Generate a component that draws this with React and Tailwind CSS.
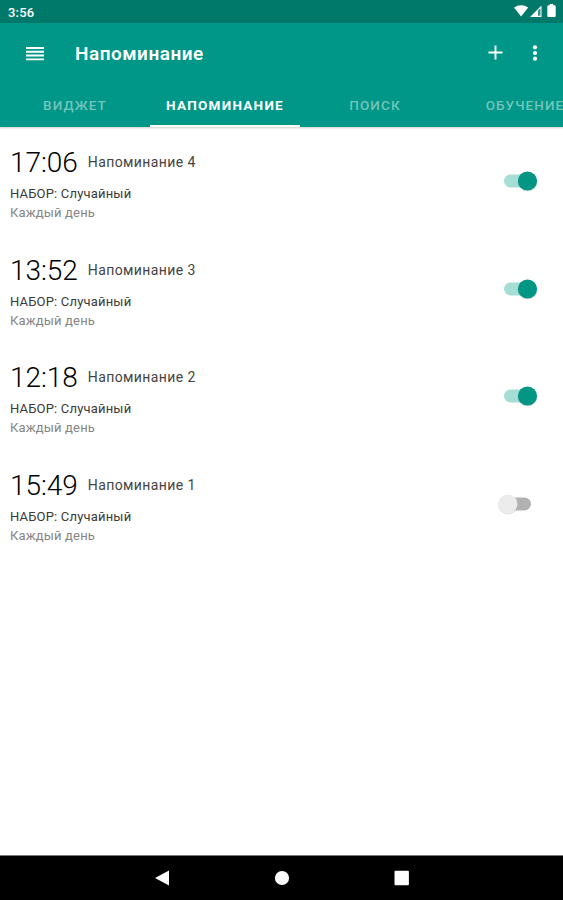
import { useState } from 'react';
import clsx from 'clsx';

const tabs = ['Виджет', 'Напоминание', 'Поиск', 'Обучение'];

const initialReminders = [
  { id: 4, time: '17:06', enabled: true },
  { id: 3, time: '13:52', enabled: true },
  { id: 2, time: '12:18', enabled: true },
  { id: 1, time: '15:49', enabled: false },
];

function StatusBar() {
  return (
    <div className="flex h-[23px] items-center justify-between bg-[#00796b] pl-2 pr-[6px] text-white">
      <span className="pt-[2px] text-[13px] font-medium leading-none tracking-[0.2px]">3:56</span>
      <div className="flex h-full items-start pt-[4px]">
        <svg width="44" height="14" viewBox="0 0 44 14" fill="currentColor">
          <path d="M1 3.600C5 .3 11.200 .3 15.200 3.600L8.100 12.500Z" />
          <path fillRule="evenodd" d="M17 13L28.500 1.500V13ZM25 6.500V11.800H27.400V4.200Z" />
          <path d="M25 6.500V11.800H27.400V4.200Z" opacity="0.2" />
          <path d="M36.700 0H40.300V1.300H41.500Q42.700 1.300 42.700 2.500V11.800Q42.700 13 41.500 13H35.500Q34.300 13 34.300 11.800V2.500Q34.300 1.300 35.500 1.300H36.700Z" />
        </svg>
      </div>
    </div>
  );
}

function Toolbar() {
  return (
    <div className="flex h-[61px] items-center pl-[25px] pr-[23px] text-white">
      <button aria-label="Меню">
        <svg width="20" height="14" viewBox="0 0 20 14" fill="currentColor">
          <path d="M1 0H19V1.900H1ZM1 3.800H19V5.700H1ZM1 7.600H19V9.500H1ZM1 11.400H19V13.300H1Z" />
        </svg>
      </button>
      <h1 className="ml-[30px] flex-1 text-[19px] font-semibold leading-none tracking-[0.5px]">Напоминание</h1>
      <button aria-label="Добавить" className="mb-[2px] mr-[27px]">
        <svg width="15" height="15" viewBox="0 0 15 15" stroke="currentColor" strokeWidth="1.9">
          <path d="M7.500 .5V14.500M.5 7.500H14.500" />
        </svg>
      </button>
      <button aria-label="Ещё" className="mb-[2px]">
        <svg width="10" height="16" viewBox="0 0 10 16" fill="currentColor">
          <circle cx="5" cy="2.300" r="2.100" />
          <circle cx="5" cy="8" r="2.100" />
          <circle cx="5" cy="13.700" r="2.100" />
        </svg>
      </button>
    </div>
  );
}

function Switch({ checked, onChange }) {
  return (
    <button role="switch" aria-checked={checked} onClick={onChange} className="h-6 w-[46px]">
      <svg width="46" height="24" viewBox="0 0 46 24">
        <rect x="8" y="5.500" width="27" height="13" rx="6.500" fill={checked ? '#a6ddd5' : '#b2b2b2'} />
        <circle cx={checked ? 31.500 : 12} cy="12.700" r="9.900" fill="#000000" opacity="0.1" />
        <circle cx={checked ? 31.500 : 12} cy="12" r="9.600" fill={checked ? '#049684' : '#ececec'} />
      </svg>
    </button>
  );
}

function Reminder({ reminder, onToggle }) {
  return (
    <li className="flex h-[107.5px] items-start justify-between pl-[10px] pr-[21px]">
      <div className="pt-[18px]">
        <div className="flex h-[38px] items-center">
          <span className="mb-[2px] text-[28px] font-light leading-none tracking-[-0.05px] text-black">
            {reminder.time}
          </span>
          <span className="mb-[4px] ml-[10px] text-[14px] leading-none tracking-[0.4px] text-[#444444]">
            Напоминание {reminder.id}
          </span>
        </div>
        <p className="text-[13px] leading-[22px] tracking-[0.18px] text-[#3a3a3a]">НАБОР: Случайный</p>
        <p className="text-[13px] leading-4 tracking-[0.15px] text-[#858585]">Каждый день</p>
      </div>
      <div className="pt-[42px]">
        <Switch checked={reminder.enabled} onChange={() => onToggle(reminder.id)} />
      </div>
    </li>
  );
}

function NavigationBar() {
  return (
    <div className="flex h-[45px] items-center justify-center gap-[104px] border-t border-[#777777] bg-black text-white">
      <svg width="16" height="16" viewBox="0 0 16 16" fill="currentColor">
        <path d="M1 8L15 .500V15.500Z" />
      </svg>
      <svg width="16" height="16" viewBox="0 0 16 16" fill="currentColor">
        <circle cx="8" cy="8" r="7.100" />
      </svg>
      <svg width="16" height="16" viewBox="0 0 16 16" fill="currentColor">
        <rect x=".5" y=".8" width="14.400" height="14.400" rx="1" />
      </svg>
    </div>
  );
}

export default function App() {
  const [activeTab, setActiveTab] = useState(1);
  const [reminders, setReminders] = useState(initialReminders);

  const toggle = (id) =>
    setReminders(reminders.map((r) => (r.id === id ? { ...r, enabled: !r.enabled } : r)));

  return (
    <div className="flex h-[900px] w-[563px] flex-col overflow-hidden bg-white font-[Roboto,sans-serif]">
      <StatusBar />
      <header className="bg-[#009688] shadow-[0_1px_2px_rgba(0,0,0,0.2)]">
        <Toolbar />
        <nav className="flex h-[43px] overflow-hidden">
          {tabs.map((tab, i) => (
            <button
              key={tab}
              onClick={() => setActiveTab(i)}
              className={clsx(
                'w-[150px] shrink-0 border-b-2 pt-[2px] uppercase leading-none',
                i === activeTab
                  ? 'border-white text-[13.5px] font-bold tracking-[1.25px] text-white'
                  : 'border-transparent text-[13.5px] font-medium tracking-[1.1px] text-[#73c5bc]'
              )}
            >
              {tab}
            </button>
          ))}
        </nav>
      </header>

      <ul className="flex-1">
        {reminders.map((reminder) => (
          <Reminder key={reminder.id} reminder={reminder} onToggle={toggle} />
        ))}
      </ul>

      <NavigationBar />
    </div>
  );
}
